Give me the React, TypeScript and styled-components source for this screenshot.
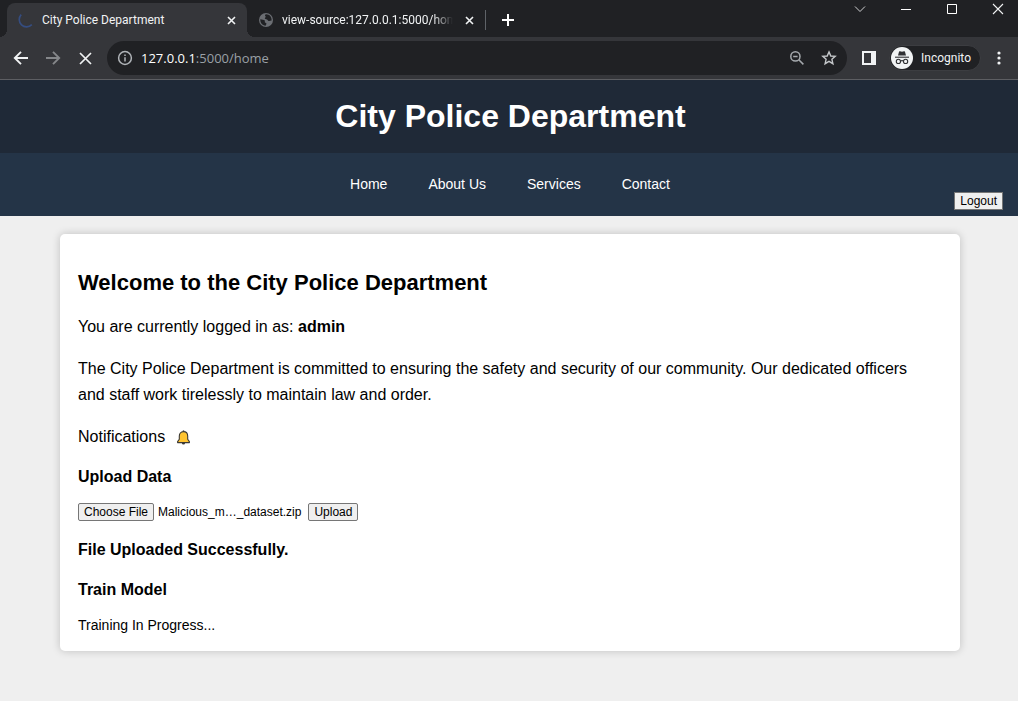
import React from "react";
import styled, { createGlobalStyle, keyframes } from "styled-components";

const GlobalStyle = createGlobalStyle`
  * { box-sizing: border-box; }
  body {
    margin: 0;
    background: #efefef;
    color: #000;
    font-family: "Liberation Sans", Arial, sans-serif;
  }
  button { font-family: inherit; }
`;

const Browser = styled.div`
  font-family: Roboto, "Segoe UI", sans-serif;
  background: #35363a;
  color: #f1f3f4;
  border-bottom: 1px solid #5d5e62;
`;

const TabStrip = styled.div`
  display: flex;
  align-items: flex-end;
  height: 37px;
  padding-left: 7px;
  background: #202124;
`;

const Tab = styled.div<{ $active?: boolean }>`
  position: relative;
  display: flex;
  align-items: center;
  height: 34px;
  width: ${(p) => (p.$active ? 240 : 238)}px;
  padding: 0 10px 0 11px;
  border-radius: 8px 8px 0 0;
  background: ${(p) => (p.$active ? "#35363a" : "transparent")};

  &::before,
  &::after {
    content: "";
    display: ${(p) => (p.$active ? "block" : "none")};
    position: absolute;
    bottom: 0;
    width: 8px;
    height: 8px;
  }
  &::before {
    left: -8px;
    background: radial-gradient(circle at 0 0, transparent 8px, #35363a 8px);
  }
  &::after {
    right: -8px;
    background: radial-gradient(circle at 100% 0, transparent 8px, #35363a 8px);
  }
`;

const TabTitle = styled.span<{ $fade?: boolean }>`
  flex: 1;
  min-width: 0;
  margin: 0 10px 0 8px;
  overflow: hidden;
  white-space: nowrap;
  font-size: 12px;
  line-height: 18px;
  mask-image: ${(p) => (p.$fade ? "linear-gradient(to right, #000 88%, transparent)" : "none")};
`;

const IconButton = styled.button<{ $w?: number }>`
  display: flex;
  align-items: center;
  justify-content: center;
  flex: none;
  width: ${(p) => p.$w ?? 32}px;
  height: 32px;
  padding: 0;
  border: 0;
  background: none;
  color: inherit;
`;

const TabDivider = styled.span`
  width: 1px;
  height: 20px;
  margin-bottom: 7px;
  background: #5f6368;
`;

const NewTab = styled(IconButton)`
  margin: 0 0 1px 6px;
`;

const WindowControls = styled.div`
  display: flex;
  align-self: flex-start;
  margin: -7px -3px 0 auto;
`;

const Toolbar = styled.div`
  display: flex;
  align-items: center;
  height: 42px;
  padding: 0 3px 0 5px;
`;

const AddressBar = styled.div`
  display: flex;
  align-items: center;
  flex: 1;
  min-width: 0;
  height: 34px;
  margin: 0 6px;
  padding: 0 2px 0 10px;
  border-radius: 17px;
  background: #202124;
  color: #9aa0a6;
`;

const Address = styled.input`
  position: absolute;
  inset: 0;
  width: 100%;
  border: 0;
  padding: 0;
  background: none;
  color: transparent;
  font: inherit;
  opacity: 0;
`;

const AddressField = styled.label`
  position: relative;
  flex: 1;
  margin-left: 8px;
  font-family: "Open Sans", "Segoe UI", sans-serif;
  font-size: 13px;
  line-height: 20px;
  color: #9aa0a6;
`;

const Host = styled.span`
  color: #fff;
`;

const Profile = styled.button`
  display: flex;
  align-items: center;
  gap: 8px;
  height: 26px;
  margin: 0 2px 0 4px;
  padding: 0 9px 0 1px;
  border: 1px solid #3c3d41;
  border-radius: 13px;
  background: #202124;
  color: #f1f3f4;
  font-size: 12px;
  line-height: 18px;
`;

const Header = styled.header`
  padding: 18px 0 18px 3px;
  background: #1f2937;
  color: #fff;
  text-align: center;
`;

const SiteTitle = styled.h1`
  margin: 0;
  font-size: 32px;
  line-height: 37px;
`;

const Nav = styled.nav`
  display: grid;
  grid-template-columns: 1fr auto 1fr;
  align-items: center;
  height: 63px;
  padding: 0 15px;
  background: #243447;
`;

const NavLinks = styled.div`
  grid-column: 2;
  display: flex;
  gap: 41px;
  padding: 0 0 2px 2px;
`;

const NavLink = styled.a`
  color: #fff;
  font-size: 14px;
  line-height: 18px;
  text-decoration: none;
`;

const Button = styled.button`
  height: 18px;
  padding: 0 5px;
  border: 1px solid #767676;
  border-radius: 2px;
  background: #efefef;
  color: #000;
  font-size: 12px;
  line-height: 16px;
`;

const LogoutButton = styled(Button)`
  align-self: end;
  justify-self: end;
  margin-bottom: 6px;
  border-radius: 0;
`;

const Main = styled.main`
  padding: 18px 20px 50px 22px;
`;

const Card = styled.section`
  max-width: 900px;
  margin: 0 auto;
  padding: 18px 18px 13px;
  border-radius: 5px;
  background: #fff;
  box-shadow: 0 0 9px rgba(0, 0, 0, 0.2);
`;

const CardTitle = styled.h2`
  margin: 18px 0;
  font-size: 22px;
  line-height: 26px;
`;

const Text = styled.p`
  max-width: 850px;
  margin: 16px 0;
  font-size: 16px;
  line-height: 26px;
`;

const Notifications = styled(Text)`
  display: flex;
  align-items: center;
  gap: 11px;
  margin-bottom: 14px;
`;

const Heading = styled.h3`
  margin: 14px 0 9px;
  font-size: 16px;
  line-height: 26px;
`;

const UploadForm = styled.form`
  display: flex;
  align-items: center;
  margin: 13px 0 16px;
`;

const HiddenFile = styled.input`
  position: absolute;
  width: 1px;
  height: 1px;
  opacity: 0;
`;

const FileName = styled.span`
  margin: 0 7px 0 4px;
  font-size: 12px;
  line-height: 18px;
`;

const Status = styled.p`
  margin: 9px 0 0;
  font-size: 14px;
  line-height: 26px;
`;

const spin = keyframes`to { transform: rotate(360deg); }`;

const SpinnerSvg = styled.svg`
  flex: none;
  @media (prefers-reduced-motion: no-preference) {
    animation: ${spin} 60s linear infinite;
  }
`;

const Spinner = () => (
  <SpinnerSvg width="16" height="16" viewBox="0 0 16 16" fill="none" stroke="#354d80" strokeWidth="1.6">
    <path d="M3.2 2.6A7 7 0 0 0 13.8 12.6" />
  </SpinnerSvg>
);

const Globe = () => (
  <svg width="16" height="16" viewBox="0 0 16 16">
    <circle cx="8" cy="8" r="7" fill="#6b6e73" />
    <path
      d="M8.3 2.3C6.9 2.5 6.6 3.6 7.6 4.4C8.2 5 7 5.3 6.8 6.2C6.7 7 8.2 7 9 7.4C9.9 7.9 10 9 11.2 9.1L13.6 8.4C13.8 5 11.6 2.4 8.3 2.3ZM2.3 7.3C4 7.6 6 7.6 6.8 8.6C7.2 9.5 6.4 9.9 7 10.6C7.6 11.2 8.6 11 8.4 12L7.6 13.7C4.3 13.5 2.1 10.8 2.3 7.3Z"
      fill="#202124"
    />
  </svg>
);

const Cross = ({ size, width }: { size: number; width: number }) => (
  <svg width={size} height={size} viewBox={`0 0 ${size} ${size}`} stroke="currentColor" strokeWidth={width}>
    <path d={`M1 1L${size - 1} ${size - 1}M${size - 1} 1L1 ${size - 1}`} />
  </svg>
);

const Arrow = ({ back }: { back?: boolean }) => (
  <svg width="16" height="16" viewBox="0 0 16 16" fill="none" stroke={back ? "#f1f3f4" : "#85878a"} strokeWidth="1.9">
    <path d={back ? "M15 8H2.5M8 1.8L1.8 8L8 14.2" : "M1 8H13.5M8 1.8L14.2 8L8 14.2"} />
  </svg>
);

const Info = () => (
  <svg width="16" height="16" viewBox="0 0 16 16" fill="none" stroke="#b0b4b8" strokeWidth="1.5">
    <circle cx="8" cy="8" r="6.4" />
    <path d="M8 7.2V11.6M8 4.4V6" />
  </svg>
);

const ZoomOut = () => (
  <svg width="16" height="16" viewBox="0 0 16 16" fill="none" stroke="#a5a9ad" strokeWidth="1.5">
    <circle cx="6.4" cy="6.4" r="4.6" />
    <path d="M9.8 9.8L14.4 14.4M4.2 6.4H8.6" />
  </svg>
);

const Star = () => (
  <svg width="16" height="16" viewBox="0 0 16 16" fill="none" stroke="#c4c7ca" strokeWidth="1.4">
    <path d="M8 1.9L9.8 6L14.2 6.4L10.9 9.3L11.9 13.7L8 11.4L4.1 13.7L5.1 9.3L1.8 6.4L6.2 6Z" />
  </svg>
);

const SidePanel = () => (
  <svg width="14" height="14" viewBox="0 0 14 14">
    <path fill="#f1f3f4" fillRule="evenodd" d="M0 0H14V14H0ZM2 2V12H9V2Z" />
  </svg>
);

const IncognitoIcon = () => (
  <svg width="22" height="22" viewBox="0 0 22 22">
    <circle cx="11" cy="11" r="11" fill="#f1f3f4" />
    <path d="M7 8.4L8.1 4.6Q8.3 4 9 4.2L11 4.8L13 4.2Q13.7 4 13.9 4.6L15 8.4Z" fill="#303134" />
    <path d="M4 10.2H18" stroke="#303134" strokeWidth="1.1" />
    <g fill="none" stroke="#303134" strokeWidth="1.1">
      <circle cx="7.4" cy="14.4" r="2.1" />
      <circle cx="14.6" cy="14.4" r="2.1" />
      <path d="M9.5 14Q11 13.2 12.5 14" />
    </g>
  </svg>
);

const Bell = () => (
  <svg width="15" height="16" viewBox="0 0 15 16">
    <circle cx="7.5" cy="14" r="1.6" fill="#3c3a36" />
    <path d="M7.5 2.6C4.6 2.6 3.3 4.8 3.3 7.2V10.2L1.6 12.6V13.6H13.4V12.6L11.7 10.2V7.2C11.7 4.8 10.4 2.6 7.5 2.6Z" fill="#ffc431" stroke="#3c3a36" strokeWidth="1.1" strokeLinejoin="round" />
    <path d="M7.5 1.4V2.6" stroke="#3c3a36" strokeWidth="1.4" />
  </svg>
);

const LINKS = ["Home", "About Us", "Services", "Contact"];

export default function App() {
  const fileRef = React.useRef<HTMLInputElement>(null);
  return (
    <>
      <GlobalStyle />
      <Browser>
        <TabStrip>
          <Tab $active>
            <Spinner />
            <TabTitle>City Police Department</TabTitle>
            <IconButton $w={12} aria-label="Close tab"><Cross size={9} width={1.6} /></IconButton>
          </Tab>
          <Tab>
            <Globe />
            <TabTitle $fade>view-source:127.0.0.1:5000/home</TabTitle>
            <IconButton $w={12} aria-label="Close tab"><Cross size={9} width={1.6} /></IconButton>
          </Tab>
          <TabDivider />
          <NewTab aria-label="New tab">
            <svg width="12" height="12" viewBox="0 0 12 12" stroke="#fff" strokeWidth="2"><path d="M6 0V12M0 6H12" /></svg>
          </NewTab>
          <WindowControls>
            <IconButton $w={46} aria-label="Search tabs">
              <svg width="12" height="12" viewBox="0 0 12 12" fill="none" stroke="#d0d1d3"><path d="M1 3.5L6 8.5L11 3.5" /></svg>
            </IconButton>
            <IconButton $w={46} aria-label="Minimize">
              <svg width="10" height="10" viewBox="0 0 10 10" stroke="#fff"><path d="M0 5.5H10" /></svg>
            </IconButton>
            <IconButton $w={46} aria-label="Maximize">
              <svg width="10" height="10" viewBox="0 0 10 10" fill="none" stroke="#fff"><path d="M.5 .5H9.5V9.5H.5Z" /></svg>
            </IconButton>
            <IconButton $w={46} aria-label="Close"><Cross size={12} width={1.1} /></IconButton>
          </WindowControls>
        </TabStrip>
        <Toolbar>
          <IconButton aria-label="Back"><Arrow back /></IconButton>
          <IconButton aria-label="Forward"><Arrow /></IconButton>
          <IconButton aria-label="Stop loading"><Cross size={13} width={1.7} /></IconButton>
          <AddressBar>
            <Info />
            <AddressField>
              <Host>127.0.0.1</Host>:5000/home
              <Address aria-label="Address" />
            </AddressField>
            <IconButton aria-label="Zoom"><ZoomOut /></IconButton>
            <IconButton aria-label="Bookmark"><Star /></IconButton>
          </AddressBar>
          <IconButton aria-label="Side panel"><SidePanel /></IconButton>
          <Profile><IncognitoIcon />Incognito</Profile>
          <IconButton aria-label="Menu">
            <svg width="4" height="14" viewBox="0 0 4 14" fill="#f1f3f4">
              <circle cx="2" cy="2" r="1.6" /><circle cx="2" cy="7" r="1.6" /><circle cx="2" cy="12" r="1.6" />
            </svg>
          </IconButton>
        </Toolbar>
      </Browser>
      <Header><SiteTitle>City Police Department</SiteTitle></Header>
      <Nav>
        <NavLinks>
          {LINKS.map((l) => <NavLink key={l} href="#">{l}</NavLink>)}
        </NavLinks>
        <LogoutButton>Logout</LogoutButton>
      </Nav>
      <Main>
        <Card>
          <CardTitle>Welcome to the City Police Department</CardTitle>
          <Text>You are currently logged in as: <strong>admin</strong></Text>
          <Text>
            The City Police Department is committed to ensuring the safety and security of our
            community. Our dedicated officers and staff work tirelessly to maintain law and order.
          </Text>
          <Notifications>Notifications <Bell /></Notifications>
          <Heading>Upload Data</Heading>
          <UploadForm onSubmit={(e) => e.preventDefault()}>
            <HiddenFile ref={fileRef} type="file" tabIndex={-1} aria-label="Data file" />
            <Button type="button" onClick={() => fileRef.current?.click()}>Choose File</Button>
            <FileName>Malicious_m…_dataset.zip</FileName>
            <Button type="submit">Upload</Button>
          </UploadForm>
          <Heading>File Uploaded Successfully.</Heading>
          <Heading>Train Model</Heading>
          <Status>Training In Progress...</Status>
        </Card>
      </Main>
    </>
  );
}
